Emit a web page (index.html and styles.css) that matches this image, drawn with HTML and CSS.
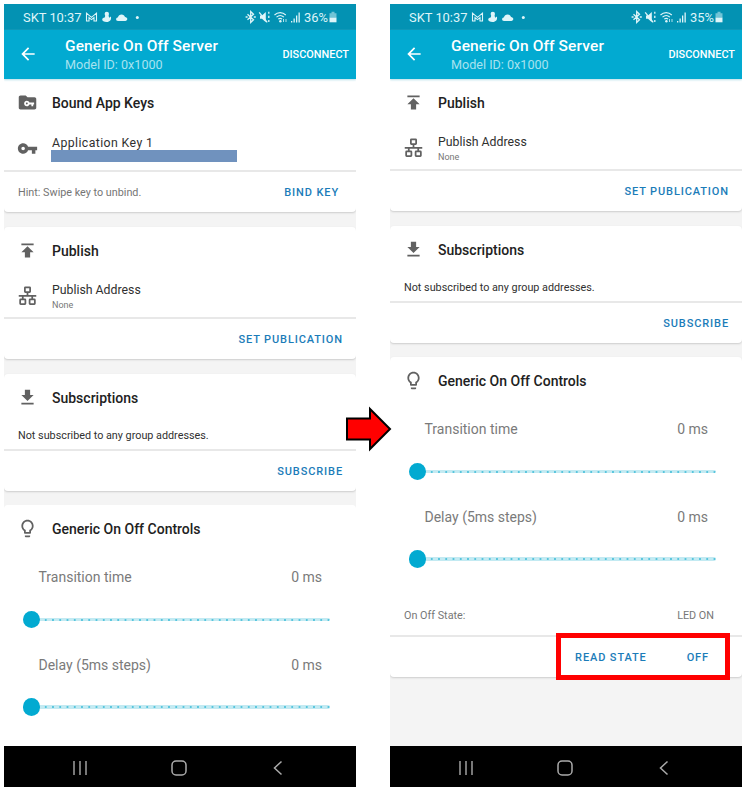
FILE: index.html
```html
<!DOCTYPE html>
<html lang="en">
<head>
<meta charset="utf-8">
<title>Generic On Off Server</title>
<link rel="stylesheet" href="styles.css">
</head>
<body>
<svg class="defs" width="0" height="0">
  <symbol id="back" viewBox="0 0 24 24"><path d="M20 11H7.83l5.59-5.59L12 4l-8 8 8 8 1.41-1.41L7.83 13H20v-2z"/></symbol>
  <symbol id="publish" viewBox="0 0 24 24"><path d="M5 4v2h14V4H5zm0 10h4v6h6v-6h4l-7-7-7 7z"/></symbol>
  <symbol id="download" viewBox="0 0 24 24"><path d="M19 9h-4V3H9v6H5l7 7 7-7zM5 18v2h14v-2H5z"/></symbol>
  <symbol id="key" viewBox="0 0 24 24"><path d="M12.65 10C11.83 7.67 9.61 6 7 6c-3.31 0-6 2.69-6 6s2.69 6 6 6c2.61 0 4.83-1.67 5.65-4H17v4h4v-4h2v-4H12.65zM7 14c-1.1 0-2-.9-2-2s.9-2 2-2 2 .9 2 2-.9 2-2 2z"/></symbol>
  <symbol id="folder" viewBox="0 0 24 24"><path d="M10 4H4c-1.1 0-2 .9-2 2v12c0 1.1.9 2 2 2h16c1.1 0 2-.9 2-2V8c0-1.1-.9-2-2-2h-8l-2-2z"/><path fill="#fff" transform="translate(7.6 6.9) scale(.52)" d="M12.65 10C11.83 7.67 9.61 6 7 6c-3.31 0-6 2.69-6 6s2.69 6 6 6c2.61 0 4.83-1.67 5.65-4H17v4h4v-4h2v-4H12.65zM7 14c-1.1 0-2-.9-2-2s.9-2 2-2 2 .9 2 2-.9 2-2 2z"/></symbol>
  <symbol id="bulb" viewBox="0 0 24 24"><path d="M9 21c0 .55.45 1 1 1h4c.55 0 1-.45 1-1v-1H9v1zm3-19C8.14 2 5 5.14 5 9c0 2.38 1.19 4.47 3 5.74V17c0 .55.45 1 1 1h6c.55 0 1-.45 1-1v-2.26c1.81-1.27 3-3.36 3-5.74 0-3.86-3.14-7-7-7zm2.85 11.1l-.85.6V16h-4v-2.3l-.85-.6C7.8 12.16 7 10.63 7 9c0-2.76 2.24-5 5-5s5 2.24 5 5c0 1.63-.8 3.16-2.15 4.1z"/></symbol>
  <symbol id="network" viewBox="0 0 24 24"><g fill="none" stroke="currentColor" stroke-width="2"><rect x="9" y="2.6" width="6" height="5.4" rx=".6"/><rect x="3.6" y="16.4" width="6" height="5.4" rx=".6"/><rect x="14.4" y="16.4" width="6" height="5.4" rx=".6"/><path d="M12 8V12.5M2 12.5h20M6.6 12.5v4M17.4 12.5v4"/></g></symbol>
  <symbol id="notices" viewBox="0 0 58 14"><g fill="none" stroke="currentColor" stroke-width="1.1"><path d="M1.5 11V3.2L6.5 7.4l5-4.2V11H9V7.6L6.5 9.6 4 7.6V11z"/></g><circle cx="21.8" cy="4" r="2.2"/><path d="M20.4 5.3h3l.8 2.5 1.7-1.2c.8 3.2-1 5.5-4.3 5.5-2.7 0-4.4-1-4.4-2.5 0-1.2 1-1.8 2.5-2z"/><path d="M33 11c-1.3 0-1.9-.8-1.9-1.7 0-1 .8-1.7 1.8-1.7.4-2.1 1.9-3.1 3.7-3.1 1.7 0 2.9.9 3.4 2.5 1.4.1 2.3.9 2.3 2.1 0 1.1-.8 1.9-2 1.9z"/><circle cx="52.3" cy="7.5" r="1.5"/></symbol>
  <symbol id="signals" viewBox="0 0 58 14"><g fill="none" stroke="currentColor" stroke-width="1.3"><path d="M2.5 4.3l6 5.4-2.8 2.7V1.6l2.8 2.7-6 5.4M.6 7h2M8.8 7h2"/><path d="M23.8 1.8v2M23.8 5.8v2.2M23.8 10v2"/><path stroke-width="1.1" d="M29.5 5c3.3-3.2 8-3.2 11.3 0M31.5 7.2c2.2-2 5.2-2 7.4 0M33.3 9.2c1.2-1 2.6-1 3.8 0"/><path d="M38.5 9v3M41 9v3" stroke-width=".8"/></g><path d="M15 5.5h2L20.8 2v10.2L17 8.8h-2z"/><circle cx="35.4" cy="11.3" r="1.2"/><path d="M14.2 2.3l8 10" fill="none" stroke="currentColor" stroke-width="1.3"/><path d="M46 11h1.3v1.5H46zM48.5 8.5h1.3v4h-1.3zM51 5.5h1.3v7H51zM53.5 2.5h1.3v10h-1.3z"/></symbol>
  <symbol id="battery" viewBox="0 0 8 12"><path opacity=".5" d="M2.5.8h3v1.4h2v4.3h-7V2.2h2z"/><path d="M.5 6.500h7v4.800h-7z"/></symbol>
  <symbol id="recents" viewBox="0 0 18 18"><path fill="none" stroke="currentColor" stroke-width="1.4" d="M3 2v14M9 2v14M15 2v14"/></symbol>
  <symbol id="home" viewBox="0 0 18 18"><rect x="2" y="2" width="14" height="14" rx="4" fill="none" stroke="currentColor" stroke-width="1.5"/></symbol>
  <symbol id="navback" viewBox="0 0 18 18"><path fill="none" stroke="currentColor" stroke-width="1.5" d="M12.5 2.5L5.5 9l7 6.5"/></symbol>
</svg>
<main class="stage">
  <section class="phone">
    <div class="status"><span class="carrier">SKT 10:37</span><svg class="notices"><use href="#notices"/></svg><svg class="signals"><use href="#signals"/></svg><span class="percent">36%</span><svg class="battery"><use href="#battery"/></svg></div>
    <header class="appbar"><svg class="icon"><use href="#back"/></svg><div class="heading"><h1>Generic On Off Server</h1><p>Model ID: 0x1000</p></div><span class="disconnect">DISCONNECT</span></header>
    <div class="cards">
      <article class="card first">
        <div class="title"><svg class="icon"><use href="#folder"/></svg><h2>Bound App Keys</h2></div>
        <div class="item keyitem"><svg class="icon"><use href="#key"/></svg><div class="lines"><p class="name appkey">Application Key 1</p><div class="redacted"></div></div></div>
        <div class="actions hintrow"><span class="hint">Hint: Swipe key to unbind.</span><span class="action bind">BIND KEY</span></div>
      </article>
      <article class="card">
        <div class="title"><svg class="icon"><use href="#publish"/></svg><h2>Publish</h2></div>
        <div class="item"><svg class="icon"><use href="#network"/></svg><div class="lines"><p class="name">Publish Address</p><p class="none">None</p></div></div>
        <div class="actions"><span class="action">SET PUBLICATION</span></div>
      </article>
      <article class="card">
        <div class="title"><svg class="icon"><use href="#download"/></svg><h2>Subscriptions</h2></div>
        <p class="message">Not subscribed to any group addresses.</p>
        <div class="actions"><span class="action">SUBSCRIBE</span></div>
      </article>
      <article class="card controls continues">
        <div class="title"><svg class="icon"><use href="#bulb"/></svg><h2>Generic On Off Controls</h2></div>
        <div class="setting"><div class="label"><span>Transition time</span><span>0 ms</span></div><div class="slider"><i class="thumb"></i></div></div>
        <div class="setting"><div class="label"><span>Delay (5ms steps)</span><span>0 ms</span></div><div class="slider"><i class="thumb"></i></div></div>
      </article>
    </div>
    <nav class="navbar"><svg><use href="#recents"/></svg><svg><use href="#home"/></svg><svg><use href="#navback"/></svg></nav>
  </section>
  <section class="phone">
    <div class="status"><span class="carrier">SKT 10:37</span><svg class="notices"><use href="#notices"/></svg><svg class="signals"><use href="#signals"/></svg><span class="percent">35%</span><svg class="battery"><use href="#battery"/></svg></div>
    <header class="appbar"><svg class="icon"><use href="#back"/></svg><div class="heading"><h1>Generic On Off Server</h1><p>Model ID: 0x1000</p></div><span class="disconnect">DISCONNECT</span></header>
    <div class="cards">
      <article class="card first">
        <div class="title"><svg class="icon"><use href="#publish"/></svg><h2>Publish</h2></div>
        <div class="item"><svg class="icon"><use href="#network"/></svg><div class="lines"><p class="name">Publish Address</p><p class="none">None</p></div></div>
        <div class="actions"><span class="action">SET PUBLICATION</span></div>
      </article>
      <article class="card">
        <div class="title"><svg class="icon"><use href="#download"/></svg><h2>Subscriptions</h2></div>
        <p class="message">Not subscribed to any group addresses.</p>
        <div class="actions"><span class="action">SUBSCRIBE</span></div>
      </article>
      <article class="card controls">
        <div class="title"><svg class="icon"><use href="#bulb"/></svg><h2>Generic On Off Controls</h2></div>
        <div class="setting"><div class="label"><span>Transition time</span><span>0 ms</span></div><div class="slider"><i class="thumb"></i></div></div>
        <div class="setting"><div class="label"><span>Delay (5ms steps)</span><span>0 ms</span></div><div class="slider"><i class="thumb"></i></div></div>
        <div class="state"><span>On Off State:</span><span>LED ON</span></div>
        <div class="actions stateactions"><span class="action">READ STATE</span><span class="action off">OFF</span><div class="highlight"></div></div>
      </article>
    </div>
    <nav class="navbar"><svg><use href="#recents"/></svg><svg><use href="#home"/></svg><svg><use href="#navback"/></svg></nav>
  </section>
  <svg class="arrow" viewBox="0 0 48 46"><path d="M2 12.5h23V3l20 20-20 20v-9.5H2z" fill="#f00" stroke="#000" stroke-width="2"/></svg>
</main>
</body>
</html>
```

FILE: styles.css
```css
* { box-sizing: border-box; }
body { margin: 0; background: #fff; font-family: Roboto, sans-serif; color: #212121; }
h1, h2, p { margin: 0; }
svg { display: block; fill: currentColor; flex: none; }
span, p, h1, h2 { white-space: nowrap; }
.defs { position: absolute; }
.stage { position: relative; display: flex; gap: 34px; width: 747px; height: 793px; padding: 4px; }
.phone { display: flex; flex-direction: column; width: 352px; height: 783px; overflow: hidden; }
.status { display: flex; align-items: center; height: 26px; padding: 0 19px 0 19px; background: #0392b3; color: #dff5f9; }
.carrier { font-size: 12.9px; width: 62px; }
.notices { width: 58px; height: 14px; }
.signals { width: 58px; height: 14px; margin-left: auto; }
.percent { font-size: 12.9px; width: 25px; margin-left: 1px; }
.battery { width: 8px; height: 12px; margin-bottom: 1px; }
.appbar { display: flex; height: 49px; padding-right: 7px; background: #02aad1; color: #fff; box-shadow: 0 1px 2px #b9dfe8; z-index: 1; flex: none; }
.icon { width: 21px; height: 21px; }
.appbar .icon { width: 20px; height: 20px; margin: 14px 13px 0 14px; }
.heading { padding-left: 14px; }
.heading h1 { font-size: 15.5px; font-weight: 500; line-height: 18px; margin-top: 7px; letter-spacing: .12px; }
.heading p { font-size: 12.6px; line-height: 17px; margin-top: 1px; color: #a8e2ef; }
.disconnect { margin: 17px 0 0 auto; font-size: 10.9px; font-weight: 500; line-height: 16px; }
.cards { display: flex; flex-direction: column; gap: 15px; flex: 1; min-height: 0; overflow: hidden; background: #f4f4f4; }
.card { flex: none; background: #fff; border-radius: 4px; box-shadow: 0 1px 2px #ccc; }
.card.first { border-radius: 0 0 4px 4px; }
.controls { margin-top: -1px; }
.continues { flex: 1 0 auto; border-radius: 4px 4px 0 0; box-shadow: none; }
.title { display: flex; align-items: center; height: 48px; padding-left: 13.4px; gap: 13.6px; color: #616161; }
.title .icon { margin-bottom: 1px; }
.title h2 { font-size: 14px; font-weight: 500; line-height: 20px; color: #212121; }
.item { display: flex; height: 42px; padding-left: 13.4px; gap: 13.6px; color: #616161; }
.item .icon { margin-top: 10px; }
.name { font-size: 12.3px; line-height: 18px; margin-top: 6px; color: #303030; }
.none { font-size: 9px; line-height: 12px; color: #777; }
.keyitem { height: 43px; }
.keyitem .icon { margin-top: 11px; }
.appkey { margin-top: 7px; letter-spacing: .4px; }
.redacted { width: 186px; height: 12px; margin: -2px 0 0 -1px; background: #7092be; }
.actions { position: relative; display: flex; justify-content: flex-end; align-items: center; height: 42px; padding-right: 13px; border-top: 2px solid #e8e8e8; }
.action { font-size: 11px; font-weight: 500; letter-spacing: .88px; color: #1b7cb9; }
.hintrow { justify-content: space-between; padding: 0 17px 0 14px; }
.hint { font-size: 10.8px; color: #757575; }
.message { height: 27px; padding: 6px 0 0 14px; font-size: 10.8px; line-height: 16px; color: #303030; }
.setting { display: flex; flex-direction: column; height: 87.5px; padding: 14px 26px 0 27px; }
.label { display: flex; justify-content: space-between; padding: 0 8px 0 7.5px; color: #7a7a7a; font-size: 14px; line-height: 20px; }
.slider { position: relative; height: 3.5px; margin-top: 30.5px; border-radius: 2px; background: radial-gradient(circle, #58c5dd .8px, #c3eaf2 1.4px) -3.4px 0 / 7.25px 4px; }
.thumb { position: absolute; left: -8.5px; top: -7px; width: 17.5px; height: 17.5px; border-radius: 50%; background: #02aad1; }
.state { display: flex; justify-content: space-between; height: 55px; padding: 27px 28px 0 14px; font-size: 10.8px; line-height: 17px; color: #777; }
.stateactions { height: 42px; padding-right: 33px; gap: 40px; }
.highlight { position: absolute; left: 166px; top: -4px; width: 174px; height: 47px; border: 5px solid #f00; }
.navbar { display: flex; justify-content: space-between; align-items: center; height: 41px; padding: 2px 69.5px 0 67px; background: #000; color: #aaa; flex: none; }
.navbar svg { width: 18px; height: 18px; }
.arrow { position: absolute; left: 345px; top: 406px; width: 48px; height: 46px; }
```
